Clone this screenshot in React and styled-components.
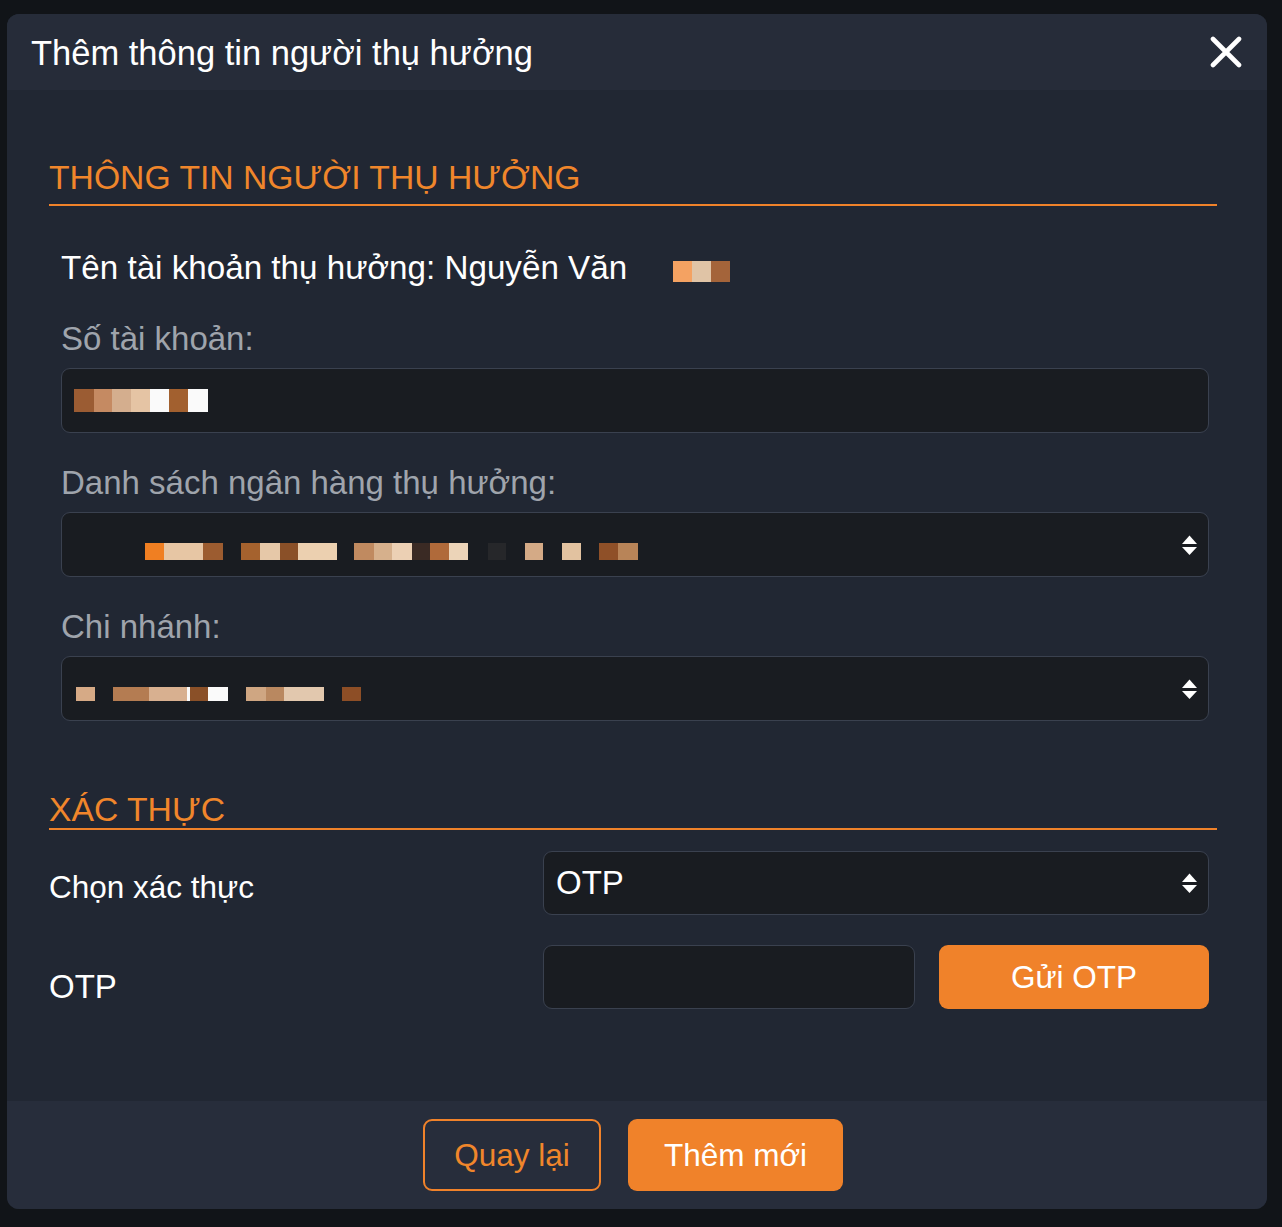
import React from "react";
import styled, { createGlobalStyle } from "styled-components";

const GlobalStyle = createGlobalStyle`
  html, body { margin: 0; padding: 0; background: #111418; }
  body { font-family: "Liberation Sans", Arial, sans-serif; }
  * { box-sizing: border-box; }
`;

const ORANGE = "#f0822a";

const Page = styled.div`
  min-height: 100vh;
  padding: 14px 15px 18px 7px;
  background: #111418;
`;

const Modal = styled.div`
  background: #212733;
  border-radius: 12px;
  overflow: hidden;
  display: flex;
  flex-direction: column;
`;

const Header = styled.div`
  height: 76px;
  background: #262c39;
  display: flex;
  align-items: center;
  justify-content: space-between;
  padding: 2px 25px 0 24px;
`;

const Title = styled.h2`
  margin: 0;
  font-size: 34.5px;
  line-height: 40px;
  font-weight: 400;
  color: #ffffff;
`;

const CloseButton = styled.button`
  width: 32px;
  height: 32px;
  padding: 0;
  margin-top: -2px;
  border: 0;
  background: none;
  display: flex;
  cursor: pointer;
`;

const Body = styled.div`
  padding: 68px 50px 92px 42px;
`;

const SectionTitle = styled.h3`
  margin: ${(p) => p.$mt || 0}px 0 0 0;
  font-size: 33.7px;
  line-height: 38px;
  font-weight: 400;
  color: #f0862b;
  padding-bottom: ${(p) => p.$pb}px;
  border-bottom: 2px solid ${ORANGE};
`;

const Fields = styled.div`
  display: flex;
  flex-direction: column;
  gap: 31px;
  margin: 45px 8px 0 12px;
`;

const NameRow = styled.div`
  display: flex;
  align-items: center;
  font-size: 33.2px;
  line-height: 38px;
  color: #ffffff;
  margin-top: -2px;
  margin-bottom: 2px;
`;

const Field = styled.div`
  display: flex;
  flex-direction: column;
  gap: 10px;
`;

const Label = styled.label`
  font-size: 33px;
  line-height: 38px;
  color: #9fa4ac;
`;

const Box = styled.div`
  height: ${(p) => p.$h || 65}px;
  background: #191c21;
  border: 1px solid #3a414f;
  border-radius: 9px;
  display: flex;
  align-items: center;
  padding: 0 11px 0 12px;
  color: #ffffff;
  font-size: 33px;
  line-height: 38px;
`;

const BoxText = styled.span`
  flex: 1;
`;

const Redacted = styled.span`
  display: inline-flex;
  align-items: stretch;
  height: ${(p) => p.$h}px;
  margin-left: ${(p) => p.$ml || 0}px;
  margin-top: ${(p) => p.$mt || 0}px;
`;

const Cell = styled.span`
  display: block;
  width: ${(p) => p.$w}px;
  background: ${(p) => p.$c};
`;

const Arrows = styled.svg`
  flex: none;
  margin-left: auto;
  display: block;
`;

const AuthRows = styled.div`
  display: flex;
  flex-direction: column;
  gap: 30px;
  margin: 21px 8px 0 0;
`;

const AuthRow = styled.div`
  display: grid;
  grid-template-columns: 494px 1fr;
  align-items: start;
`;

const AuthLabel = styled.span`
  font-size: ${(p) => p.$fs}px;
  line-height: 38px;
  color: #ffffff;
  padding-top: ${(p) => p.$pt}px;
`;

const OtpControls = styled.div`
  display: flex;
  gap: 24px;
`;

const OtpInput = styled.input`
  width: 372px;
  height: 64px;
  background: #191c21;
  border: 1px solid #3a414f;
  border-radius: 9px;
  outline: none;
  color: #fff;
  font-family: inherit;
  font-size: 33px;
  padding: 0 12px;
`;

const Button = styled.button`
  width: ${(p) => p.$w}px;
  height: ${(p) => p.$h}px;
  border-radius: 9px;
  font-family: "Liberation Sans", Arial, sans-serif;
  font-size: 31.5px;
  line-height: 38px;
  padding: 0;
  cursor: pointer;
  background: ${(p) => (p.$outline ? "transparent" : ORANGE)};
  color: ${(p) => (p.$outline ? "#f0862b" : "#ffffff")};
  border: ${(p) => (p.$outline ? `2px solid ${ORANGE}` : "none")};
`;

const Footer = styled.div`
  height: 108px;
  background: #272d3b;
  display: flex;
  align-items: center;
  justify-content: center;
  gap: 27px;
  padding-right: 8px;
`;

const SelectArrows = () => (
  <Arrows width="15" height="20" viewBox="0 0 15 20">
    <polygon points="0,9 7.5,0.5 15,9" fill="#ffffff" />
    <polygon points="0,12 15,12 7.5,20" fill="#ffffff" />
  </Arrows>
);

const CloseIcon = () => (
  <svg width="32" height="32" viewBox="0 0 32 32">
    <path d="M3 3 L29 29 M29 3 L3 29" stroke="#ffffff" strokeWidth="4.6" strokeLinecap="round" />
  </svg>
);

const PixelGroups = ({ groups, h, mt }) => (
  <>
    {groups.map((g, i) => (
      <Redacted key={i} $h={h} $ml={g.ml} $mt={mt}>
        {g.cells.map(([w, c], j) => (
          <Cell key={j} $w={w} $c={c} />
        ))}
      </Redacted>
    ))}
  </>
);

const nameGroups = [
  { ml: 46, cells: [[19, "#f4a262"], [19, "#e0c4a6"], [19, "#a4643a"]] },
];

const accountGroups = [
  {
    ml: 0,
    cells: [
      [20, "#9b5c33"],
      [18, "#c58a62"],
      [19, "#d4ae8e"],
      [19, "#e5c4a4"],
      [19, "#fafafa"],
      [19, "#a2602f"],
      [20, "#fafafa"],
    ],
  },
];

const bankGroups = [
  { ml: 71, cells: [[19, "#f07f22"], [39, "#e7c6a4"], [20, "#9c5c30"]] },
  { ml: 18, cells: [[19, "#a5622e"], [20, "#e6c8a8"], [18, "#8a5028"], [39, "#ecd0b0"]] },
  {
    ml: 17,
    cells: [
      [20, "#c08a60"],
      [18, "#d6b08c"],
      [20, "#ecd0b4"],
      [18, "#3a2a24"],
      [19, "#b06a3a"],
      [19, "#ecd4b8"],
    ],
  },
  { ml: 20, cells: [[18, "#26272a"]] },
  { ml: 19, cells: [[18, "#d4aa86"]] },
  { ml: 19, cells: [[19, "#e2c2a0"]] },
  { ml: 18, cells: [[19, "#8f5028"], [20, "#b88458"]] },
];

const branchGroups = [
  { ml: 2, cells: [[19, "#d6aa86"]] },
  {
    ml: 18,
    cells: [
      [36, "#b47c52"],
      [38, "#d8b090"],
      [3, "#fafafa"],
      [18, "#8a5028"],
      [20, "#fafafa"],
    ],
  },
  { ml: 18, cells: [[20, "#cfa682"], [18, "#b98860"], [40, "#e2c8ae"]] },
  { ml: 18, cells: [[19, "#8d4e26"]] },
];

export default function App() {
  return (
    <>
      <GlobalStyle />
      <Page>
        <Modal>
          <Header>
            <Title>Thêm thông tin người thụ hưởng</Title>
            <CloseButton aria-label="Đóng">
              <CloseIcon />
            </CloseButton>
          </Header>

          <Body>
            <SectionTitle $pb={8}>THÔNG TIN NGƯỜI THỤ HƯỞNG</SectionTitle>
            <Fields>
              <NameRow>
                Tên tài khoản thụ hưởng: Nguyễn Văn
                <PixelGroups groups={nameGroups} h={21} mt={6} />
              </NameRow>

              <Field>
                <Label>Số tài khoản:</Label>
                <Box>
                  <PixelGroups groups={accountGroups} h={23} mt={0} />
                </Box>
              </Field>

              <Field>
                <Label>Danh sách ngân hàng thụ hưởng:</Label>
                <Box>
                  <PixelGroups groups={bankGroups} h={17} mt={14} />
                  <SelectArrows />
                </Box>
              </Field>

              <Field>
                <Label>Chi nhánh:</Label>
                <Box>
                  <PixelGroups groups={branchGroups} h={14} mt={10} />
                  <SelectArrows />
                </Box>
              </Field>
            </Fields>

            <SectionTitle $pb={0} $mt={69}>XÁC THỰC</SectionTitle>
            <AuthRows>
              <AuthRow>
                <AuthLabel $fs={31.5} $pt={17}>Chọn xác thực</AuthLabel>
                <Box $h={64}>
                  <BoxText>OTP</BoxText>
                  <SelectArrows />
                </Box>
              </AuthRow>
              <AuthRow>
                <AuthLabel $fs={33} $pt={23}>OTP</AuthLabel>
                <OtpControls>
                  <OtpInput type="text" />
                  <Button $w={270} $h={64}>Gửi OTP</Button>
                </OtpControls>
              </AuthRow>
            </AuthRows>
          </Body>

          <Footer>
            <Button $outline $w={178} $h={72}>Quay lại</Button>
            <Button $w={215} $h={72}>Thêm mới</Button>
          </Footer>
        </Modal>
      </Page>
    </>
  );
}
